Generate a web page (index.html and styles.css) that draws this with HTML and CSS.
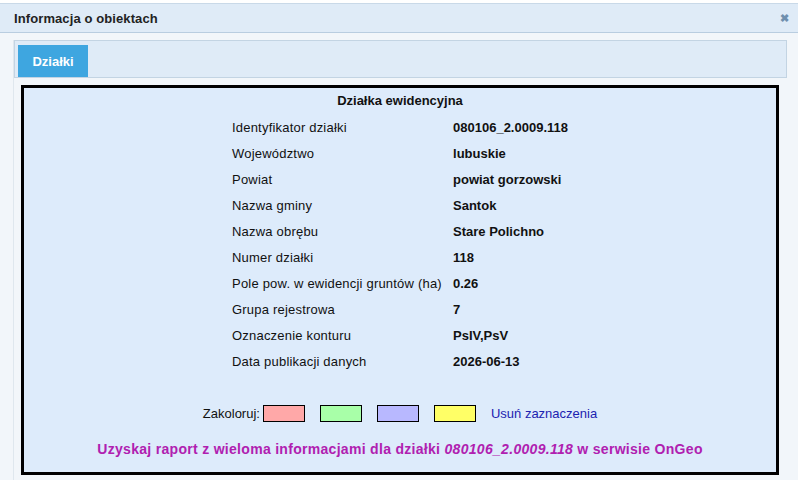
FILE: index.html
```html
<!DOCTYPE html>
<html lang="pl">
<head>
<meta charset="utf-8">
<title>Informacja o obiektach</title>
<link rel="stylesheet" href="styles.css">
</head>
<body>
<div class="window">
  <div class="header">
    <span class="title">Informacja o obiektach</span>
    <span class="close">&#x2716;</span>
  </div>
  <div class="body">
    <div class="panel">
      <div class="tabbar">
        <div class="tab">Działki</div>
      </div>
      <div class="content">
        <div class="box">
          <div class="heading">Działka ewidencyjna</div>
          <div class="grid">
            <div class="label">Identyfikator działki</div><div class="value">080106_2.0009.118</div>
            <div class="label">Województwo</div><div class="value">lubuskie</div>
            <div class="label">Powiat</div><div class="value">powiat gorzowski</div>
            <div class="label">Nazwa gminy</div><div class="value">Santok</div>
            <div class="label">Nazwa obrębu</div><div class="value">Stare Polichno</div>
            <div class="label">Numer działki</div><div class="value">118</div>
            <div class="label">Pole pow. w ewidencji gruntów (ha)</div><div class="value">0.26</div>
            <div class="label">Grupa rejestrowa</div><div class="value">7</div>
            <div class="label">Oznaczenie konturu</div><div class="value">PsIV,PsV</div>
            <div class="label">Data publikacji danych</div><div class="value">2026-06-13</div>
          </div>
          <div class="colors">
            <span class="colors-label">Zakoloruj:</span>
            <span class="swatch red"></span>
            <span class="swatch green"></span>
            <span class="swatch blue"></span>
            <span class="swatch yellow"></span>
            <a class="clear" href="#">Usuń zaznaczenia</a>
          </div>
          <div class="report">Uzyskaj raport z wieloma informacjami dla działki <em>080106_2.0009.118</em> w serwisie OnGeo</div>
        </div>
      </div>
    </div>
  </div>
</div>
</body>
</html>
```

FILE: styles.css
```css
html, body {
  margin: 0;
  padding: 0;
  background: #ffffff;
  font-family: "Liberation Sans", Arial, sans-serif;
  font-size: 13px;
  color: #111;
}
.window {
  width: 798px;
  height: 477px;
  margin-top: 3px;
  background: #f2f6fa;
  display: flex;
  flex-direction: column;
}
.header {
  height: 28px;
  border-top: 1px solid #c9d9e8;
  border-bottom: 1px solid #b9cde0;
  background: #dfebf7;
  display: flex;
  align-items: center;
  justify-content: space-between;
  padding: 0 9px 0 14px;
}
.title {
  font-weight: bold;
  font-size: 13px;
  letter-spacing: 0.1px;
  color: #222;
}
.close {
  font-size: 11px;
  color: #6f8fae;
  font-weight: bold;
}
.body {
  flex: 1;
  padding: 7px 11px 0 13px;
  display: flex;
}
.panel {
  flex: 1;
  border-left: 1px solid #dfe7ee;
  display: flex;
  flex-direction: column;
}
.tabbar {
  height: 36px;
  border: 1px solid #c3d4e3;
  background: #dfebf7;
  display: flex;
  align-items: flex-end;
  padding-left: 3px;
}
.tab {
  width: 70px;
  height: 32px;
  background: #3ea6e0;
  color: #fff;
  font-weight: bold;
  font-size: 13px;
  display: flex;
  align-items: center;
  justify-content: center;
}
.content {
  padding: 7px 8px 0 7px;
}
.box {
  height: 384px;
  border: 3px solid #000;
  background: #ddebfb;
  display: flex;
  flex-direction: column;
  align-items: center;
}
.heading {
  font-weight: bold;
  margin-top: 0;
  height: 26px;
  line-height: 26px;
}
.grid {
  display: grid;
  grid-template-columns: auto auto;
  column-gap: 10px;
  grid-auto-rows: 26px;
  align-items: center;
}
.label {
  min-width: 211px;
  letter-spacing: 0.2px;
}
.value {
  font-weight: bold;
}
.colors {
  margin-top: 26px;
  height: 26px;
  display: flex;
  align-items: center;
  gap: 15px;
}
.colors-label {
  margin-right: -12px;
}
.swatch {
  width: 40px;
  height: 15px;
  border: 1px solid #000;
}
.red { background: #ffa8a8; }
.green { background: #a8ffa8; }
.blue { background: #b8b8ff; }
.yellow { background: #ffff66; }
.clear {
  color: #1c22b0;
  text-decoration: none;
}
.report {
  margin-top: 15px;
  color: #b020b0;
  font-weight: bold;
  font-size: 14px;
  letter-spacing: 0.3px;
}
.report em {
  font-style: italic;
}
```
